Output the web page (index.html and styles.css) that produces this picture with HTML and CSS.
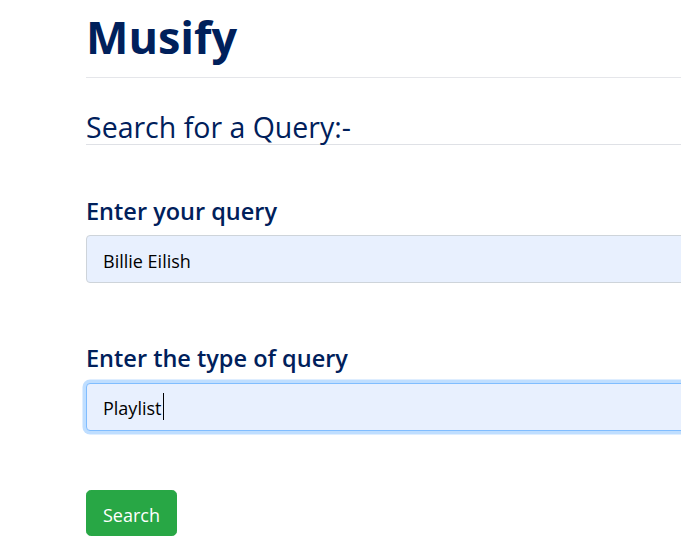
FILE: index.html
```html
<!DOCTYPE html>
<html lang="en">
<head>
<meta charset="utf-8">
<title>Musify</title>
<link rel="stylesheet" href="styles.css">
</head>
<body>
<main class="container">
  <div class="content">
    <h1 class="brand">Musify</h1>
    <hr class="rule">
    <h3 class="section-title">Search for a Query:-</h3>
    <form class="search-form">
      <div class="field">
        <label class="field-label" for="query">Enter your query</label>
        <input class="field-input" id="query" type="text" value="Billie Eilish">
      </div>
      <div class="field">
        <label class="field-label" for="qtype">Enter the type of query</label>
        <div class="input-wrap">
          <input class="field-input is-focused" id="qtype" type="text" value="Playlist">
          <span class="fake-caret" id="caret"></span>
        </div>
      </div>
      <button class="btn-search" type="button">Search</button>
    </form>
  </div>
</main>
<script src="app.js"></script>
</body>
</html>
```

FILE: styles.css
```css
html, body {
  margin: 0;
  padding: 0;
  overflow: hidden;
  background: #fff;
}
body {
  font-family: "Open Sans", "Noto Sans", sans-serif;
  color: #00205b;
}
.container {
  width: 100%;
  box-sizing: border-box;
  padding-left: 86px;
  overflow: hidden;
}
.content {
  width: 700px;
}
.brand {
  margin: 10px 0 0;
  font-size: 45px;
  font-weight: 700;
  line-height: 1.2;
}
.rule {
  margin: 13px 0 0;
  border: 0;
  border-top: 1px solid #e5e6ea;
}
.section-title {
  margin: 32px 0 0;
  font-size: 28.5px;
  font-weight: 400;
  line-height: 1.2;
  border-bottom: 1px solid #dfe1e6;
}
.search-form {
  margin-top: 49px;
  display: flex;
  flex-direction: column;
  align-items: stretch;
}
.field {
  display: flex;
  flex-direction: column;
  margin-bottom: 58px;
}
.field-label {
  font-size: 23.5px;
  font-weight: 600;
  line-height: 1.5;
  margin-bottom: 6px;
}
.input-wrap {
  position: relative;
  display: flex;
  flex-direction: column;
}
.field-input {
  height: 48px;
  box-sizing: border-box;
  padding: 3px 16px 0;
  font-family: inherit;
  font-size: 18px;
  color: #000;
  background: #e8f0fe;
  border: 1px solid #ced4da;
  border-radius: 4px;
  outline: none;
}
.field-input.is-focused, .field-input:focus {
  border-color: #80bdff;
  box-shadow: 0 0 0 3.5px rgba(0, 123, 255, 0.25);
}
.fake-caret {
  position: absolute;
  top: 10px;
  left: 77px;
  width: 1px;
  height: 27px;
  background: #000;
}
.btn-search {
  align-self: flex-start;
  height: 46px;
  margin-top: 1px;
  padding: 4px 16px 0;
  font-family: inherit;
  font-size: 18px;
  color: #fff;
  background: #28a745;
  border: 1px solid #28a745;
  border-radius: 4.8px;
}
```

FILE: app.js
```js
var input = document.getElementById('qtype');
var caret = document.getElementById('caret');
var ctx = document.createElement('canvas').getContext('2d');
var cs = getComputedStyle(input);
ctx.font = cs.fontWeight + ' ' + cs.fontSize + ' ' + cs.fontFamily;
var w = ctx.measureText(input.value).width;
caret.style.left = Math.round(19 + w) + 'px';
```
